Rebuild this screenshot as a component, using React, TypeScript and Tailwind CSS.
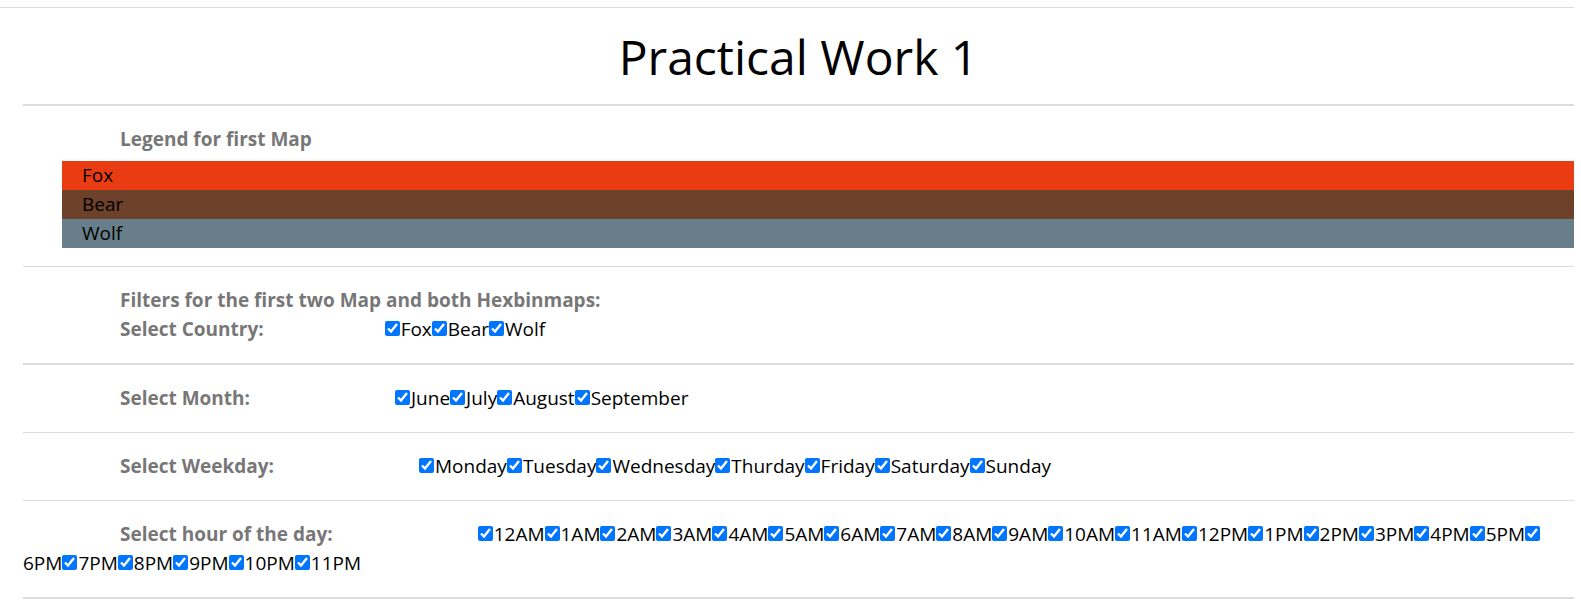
import { Fragment } from "react";

type Filter = {
  id: string;
  label: string;
  gap: string;
  rule: string;
  intro?: string;
  options: string[];
};

const legend = [
  { name: "Fox", color: "bg-[#e93c13]" },
  { name: "Bear", color: "bg-[#6d412a]" },
  { name: "Wolf", color: "bg-[#697e8b]" },
];

const filters: Filter[] = [
  {
    id: "country",
    intro: "Filters for the first two Map and both Hexbinmaps:",
    label: "Select Country:",
    gap: "mr-[121px]",
    rule: "border-b-2",
    options: ["Fox", "Bear", "Wolf"],
  },
  {
    id: "month",
    label: "Select Month:",
    gap: "mr-[145px]",
    rule: "border-b",
    options: ["June", "July", "August", "September"],
  },
  {
    id: "weekday",
    label: "Select Weekday:",
    gap: "mr-[145px]",
    rule: "border-b",
    options: ["Monday", "Tuesday", "Wednesday", "Thurday", "Friday", "Saturday", "Sunday"],
  },
  {
    id: "hour",
    label: "Select hour of the day:",
    gap: "mr-[145px]",
    rule: "border-b-2",
    options: [
      "12AM", "1AM", "2AM", "3AM", "4AM", "5AM", "6AM", "7AM", "8AM", "9AM", "10AM", "11AM",
      "12PM", "1PM", "2PM", "3PM", "4PM", "5PM", "6PM", "7PM", "8PM", "9PM", "10PM", "11PM",
    ],
  },
];

function FilterGroup({ id, label, gap, rule, intro, options }: Filter) {
  return (
    <section
      role="group"
      aria-labelledby={`${id}-label`}
      className={`border-[#dcdcdc] py-[19px] ${rule}`}
    >
      {intro && <h2 className="pl-[97px] font-bold text-[#777]">{intro}</h2>}
      <span id={`${id}-label`} className={`ml-[97px] font-bold text-[#777] ${gap}`}>
        {label}
      </span>
      {options.map((option) => (
        <Fragment key={option}>
          <input
            id={`${id}-${option}`}
            type="checkbox"
            defaultChecked
            className="mr-px size-[15px] align-baseline accent-[#0075ff]"
          />
          <label htmlFor={`${id}-${option}`}>{option}</label>
        </Fragment>
      ))}
    </section>
  );
}

export default function App() {
  return (
    <div className="bg-white pt-[7px] pr-[7px] font-['Open_Sans',sans-serif] text-[19px] leading-[29px] text-black">
      <main className="border-t border-[#dcdcdc] pl-[23px]">
        <h1 className="border-b-2 border-[#dcdcdc] pt-5 pb-[18px] text-center text-5xl leading-[58px]">
          Practical Work 1
        </h1>
        <section className="border-b border-[#dcdcdc] pt-[19px] pb-[18px]">
          <h2 className="mb-[7px] pl-[97px] font-bold text-[#777]">Legend for first Map</h2>
          <ul className="ml-[39px]">
            {legend.map(({ name, color }) => (
              <li key={name} className={`pl-5 ${color}`}>
                {name}
              </li>
            ))}
          </ul>
        </section>
        {filters.map((filter) => (
          <FilterGroup key={filter.id} {...filter} />
        ))}
      </main>
    </div>
  );
}
